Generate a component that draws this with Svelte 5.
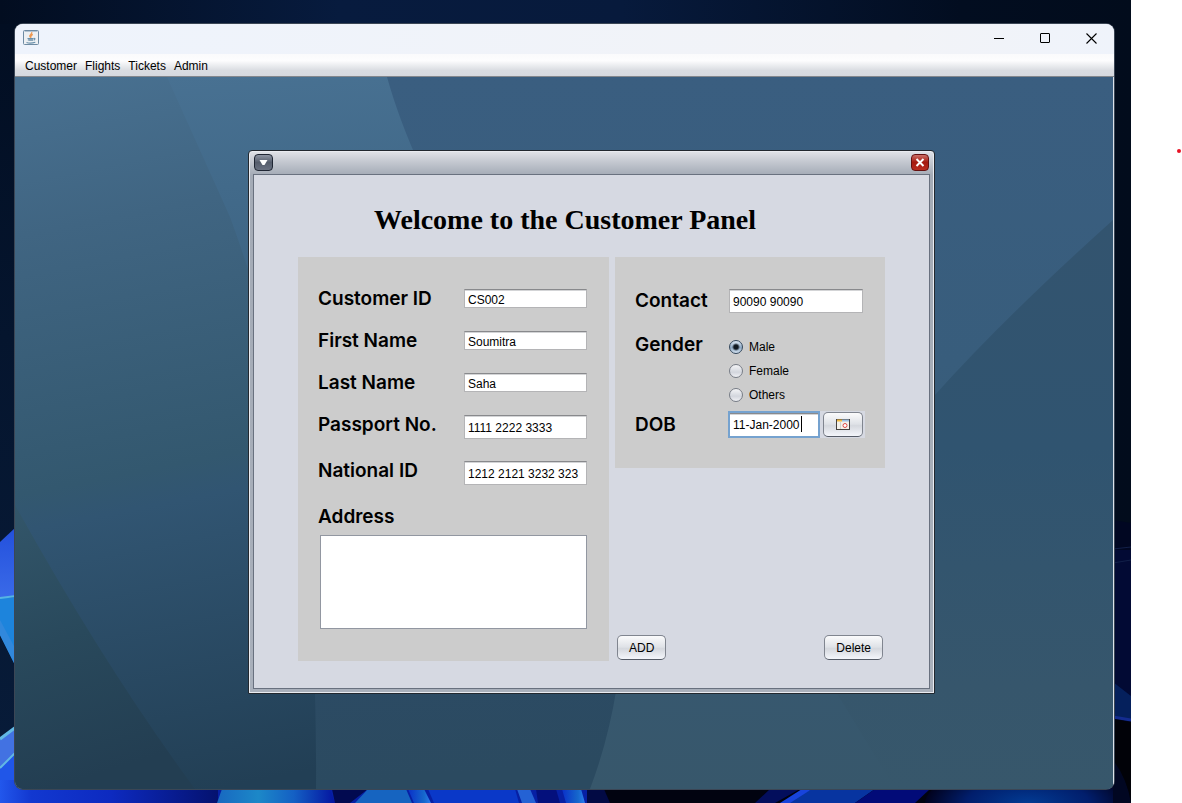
<script>
  const menus = ['Customer', 'Flights', 'Tickets', 'Admin'];
  const genders = ['Male', 'Female', 'Others'];

  let fields = $state([
    { id: 'customer-id', label: 'Customer ID', value: 'CS002', tall: false },
    { id: 'first-name', label: 'First Name', value: 'Soumitra', tall: false },
    { id: 'last-name', label: 'Last Name', value: 'Saha', tall: false },
    { id: 'passport', label: 'Passport No.', value: '1111 2222 3333', tall: true },
    { id: 'national-id', label: 'National ID', value: '1212 2121 3232 323', tall: true }
  ]);
  let address = $state('');
  let contact = $state('90090 90090');
  let gender = $state('Male');
  let dob = $state('11-Jan-2000');
</script>

<div class="screen">
  <div class="desktop">
    <svg class="wallpaper" viewBox="0 0 1131 803" preserveAspectRatio="none" aria-hidden="true">
      <defs>
        <linearGradient id="night" x1="0" x2="1">
          <stop offset="0" stop-color="#020d20" />
          <stop offset=".3" stop-color="#071b3e" />
          <stop offset=".55" stop-color="#071a3c" />
          <stop offset=".85" stop-color="#020d20" />
          <stop offset="1" stop-color="#020c1c" />
        </linearGradient>
        <linearGradient id="edge" x1="0" x2="0" y1="0" y2="1">
          <stop offset="0" stop-color="#020e22" />
          <stop offset=".4" stop-color="#05152e" />
          <stop offset="1" stop-color="#081c3a" />
        </linearGradient>
        <linearGradient id="petal" x1="0" x2="0" y1="0" y2="1">
          <stop offset="0" stop-color="#2350dc" />
          <stop offset="1" stop-color="#3a6ae8" />
        </linearGradient>
        <linearGradient id="floor" x1="0" x2="1">
          <stop offset="0" stop-color="#2257ec" />
          <stop offset=".14" stop-color="#1238d0" />
          <stop offset=".5" stop-color="#0d2ac0" />
          <stop offset="1" stop-color="#04116c" />
        </linearGradient>
        <linearGradient id="glow" x1="0" x2="1">
          <stop offset="0" stop-color="#1868c0" />
          <stop offset=".35" stop-color="#1c88c8" />
          <stop offset=".65" stop-color="#1460c4" />
          <stop offset="1" stop-color="#0414a0" />
        </linearGradient>
        <radialGradient id="deep">
          <stop offset="0" stop-color="#023c94" />
          <stop offset=".6" stop-color="#011e6c" />
          <stop offset="1" stop-color="#01021e" />
        </radialGradient>
        <linearGradient id="streak" x1="0" x2="1">
          <stop offset="0" stop-color="#0a30c8" />
          <stop offset=".7" stop-color="#1668cc" />
          <stop offset="1" stop-color="#2c7cf0" />
        </linearGradient>
      </defs>
      <rect width="1131" height="803" fill="url(#night)" />
      <rect y="24" width="16" height="779" fill="url(#edge)" />
      <path d="M0 542L16 527V597L0 598Z" fill="url(#petal)" />
      <path d="M0 598L16 597V667L0 635Z" fill="#1d84dc" />
      <path d="M0 620L16 650V667L0 635Z" fill="#3188dc" />
      <path d="M0 598L16 596" stroke="#56b4e4" stroke-width="2" />
      <path d="M0 739L16 727V803H0Z" fill="#4272e2" />
      <path d="M0 739L16 727" stroke="#62b8e4" stroke-width="3" />
      <path d="M0 768L16 752V803H0Z" fill="#2056e8" />
      <path d="M0 768L16 752" stroke="#62b8e4" stroke-width="2" />
      <rect x="0" y="780" width="222" height="23" fill="url(#floor)" />
      <rect x="218" y="789" width="370" height="14" fill="#0720a4" />
      <path d="M222 789H330L335 803H217Z" fill="url(#glow)" />
      <path d="M332 789H368L350 803H335Z" fill="#020a50" />
      <path d="M368 789H406L412 803H355Z" fill="#1664c0" />
      <path d="M408 789H424L431 803H414Z" fill="url(#streak)" />
      <path d="M428 789H515L519 803H434Z" fill="#0a38c8" />
      <path d="M517 789H530L536 803H522Z" fill="#2462d4" />
      <path d="M536 789H556L560 803H538Z" fill="#04107c" />
      <path d="M562 789H581L585 803H566Z" fill="url(#streak)" />
      <rect x="587" y="789" width="544" height="14" fill="#010310" />
      <path d="M587 789H604L610 803H587Z" fill="#020a44" />
      <path d="M770 789H800L775 803H755Z" fill="#030e5c" />
      <path d="M812 789H875L855 803H785Z" fill="#0734a0" />
      <path d="M802 789H812L790 803H780Z" fill="#1844dc" />
      <path d="M875 789H930L915 803H855Z" fill="#020b78" />
      <ellipse cx="1028" cy="804" rx="103" ry="40" fill="url(#deep)" />
      <path d="M1113 520L1131 523V803H1113Z" fill="#010722" />
      <path d="M1113 550H1131V700L1113 682Z" fill="#020a34" />
      <path d="M1113 549L1131 547M1113 563L1131 560" stroke="#122048" />
      <path d="M1113 682L1131 696V720L1113 716Z" fill="#05205c" />
      <path d="M1113 717L1131 720" stroke="#142c90" stroke-width="3" />
      <path d="M1113 719L1131 722V803Q1127 778 1113 760Z" fill="#010208" />
    </svg>

    <main class="app-window">
      <header class="title-bar">
        <svg class="java" viewBox="0 0 16 16" width="16" height="16" aria-hidden="true">
          <rect x=".5" y=".5" width="15" height="14" rx="1" fill="#edf0f3" stroke="#6e8ba3" />
          <path d="M1.500 1.500H14.500" stroke="#b4c4d2" />
          <path d="M8.600 2.200C9.800 4 6 4.800 6.900 6.400C7.200 7 7.800 7.300 7.900 7.800M9.800 4.400C8.200 5.200 8 5.800 8.600 6.500" fill="none" stroke="#ee9a53" stroke-width="1.400" />
          <path d="M4.500 8.500H10.500M4.800 10H10.400M10.800 8.400Q13 8.400 11 10.200M3.500 12.500Q7.500 13.700 12.300 12.200" fill="none" stroke="#6a90ab" stroke-width="1.200" />
          <path d="M5 9H10V11H6Z" fill="#8aa5b8" />
        </svg>
        <div class="window-controls">
          <button aria-label="Minimize">
            <svg viewBox="0 0 11 11" width="11" height="11"><path d="M0 5.500H10" stroke="#000" /></svg>
          </button>
          <button aria-label="Maximize">
            <svg viewBox="0 0 11 11" width="11" height="11"><rect x=".5" y=".5" width="9" height="9" rx=".5" fill="none" stroke="#000" /></svg>
          </button>
          <button aria-label="Close">
            <svg viewBox="0 0 11 11" width="11" height="11"><path d="M.5.500L10.500 10.500M10.500.500L.5 10.500" stroke="#000" stroke-width="1.100" /></svg>
          </button>
        </div>
      </header>

      <nav class="menu-bar">
        {#each menus as menu}
          <button>{menu}</button>
        {/each}
      </nav>

      <div class="canvas">
        <svg class="backdrop" viewBox="0 0 1098 712" preserveAspectRatio="none" aria-hidden="true">
          <defs>
            <linearGradient id="b1" gradientUnits="userSpaceOnUse" x1="60" y1="0" x2="200" y2="712">
              <stop offset="0" stop-color="#487090" />
              <stop offset=".2" stop-color="#406582" />
              <stop offset=".55" stop-color="#33586f" />
              <stop offset=".6" stop-color="#315572" />
              <stop offset="1" stop-color="#223f55" />
            </linearGradient>
            <linearGradient id="b2" x1="0" y1="0" x2=".1" y2="1">
              <stop offset="0" stop-color="#487192" />
              <stop offset=".5" stop-color="#355b79" />
              <stop offset=".86" stop-color="#2c4b64" />
              <stop offset="1" stop-color="#2b4a60" />
            </linearGradient>
            <linearGradient id="b3" gradientUnits="userSpaceOnUse" x1="0" y1="0" x2="0" y2="712">
              <stop offset="0" stop-color="#3a5e80" />
              <stop offset=".4" stop-color="#385d7c" />
              <stop offset=".85" stop-color="#37586f" />
              <stop offset="1" stop-color="#37576b" />
            </linearGradient>
            <linearGradient id="b4" gradientUnits="userSpaceOnUse" x1="0" y1="140" x2="0" y2="712">
              <stop offset="0" stop-color="#33546f" />
              <stop offset=".4" stop-color="#305470" />
              <stop offset=".82" stop-color="#36566c" />
              <stop offset="1" stop-color="#37576b" />
            </linearGradient>
            <linearGradient id="b5" x1="0" y1="0" x2=".2" y2="1">
              <stop offset="0" stop-color="#33566a" />
              <stop offset=".5" stop-color="#29495c" />
              <stop offset="1" stop-color="#233e52" />
            </linearGradient>
          </defs>
          <rect width="1098" height="712" fill="url(#b1)" />
          <path d="M152 0L215 140C270 290 303 450 301 712H1098V0Z" fill="url(#b2)" />
          <path d="M372 0C400 100 470 220 540 320C620 420 625 580 575 712H1098V0Z" fill="url(#b3)" />
          <path d="M1098 143Q990 240 919 319Q780 480 812 600L880 712H1098Z" fill="url(#b4)" />
          <path d="M0 428Q90 590 180 712H0Z" fill="url(#b5)" />
        </svg>

        <section class="frame" aria-label="Customer panel">
          <div class="frame-bar">
            <button class="frame-menu" aria-label="Window menu">
              <svg viewBox="0 0 17 15" width="17" height="15"><path d="M4.500 5H12.500L9.500 10H7.500Z" fill="#fff" /></svg>
            </button>
            <button class="frame-close" aria-label="Close panel">
              <svg viewBox="0 0 16 15" width="16" height="15"><path d="M4.500 4L11.500 11M11.500 4L4.500 11" stroke="#fff" stroke-width="2" /></svg>
            </button>
          </div>

          <div class="content">
            <h1>Welcome to the Customer Panel</h1>
            <div class="columns">
              <form class="card identity">
                {#each fields as field}
                  <div class="row">
                    <label for={field.id}>{field.label}</label>
                    <input id={field.id} class:tall={field.tall} type="text" bind:value={field.value} />
                  </div>
                {/each}
                <div class="address">
                  <label for="address">Address</label>
                  <textarea id="address" bind:value={address}></textarea>
                </div>
              </form>

              <div class="side">
                <form class="card details">
                  <label for="contact">Contact</label>
                  <input id="contact" class="tall" type="text" bind:value={contact} />
                  <span id="gender-label" class="caption">Gender</span>
                  <div class="radios" role="radiogroup" aria-labelledby="gender-label">
                    {#each genders as option}
                      <label><input type="radio" name="gender" value={option} bind:group={gender} />{option}</label>
                    {/each}
                  </div>
                  <label for="dob">DOB</label>
                  <div class="date">
                    <div class="date-box">
                      <input id="dob" type="text" bind:value={dob} />
                      <i class="caret"></i>
                    </div>
                    <div class="picker">
                      <button type="button" class="push" aria-label="Pick a date">
                        <svg viewBox="0 0 14 11" width="14" height="11">
                          <rect x=".5" y=".5" width="13" height="10" fill="#f4f1ea" stroke="#45413e" />
                          <path d="M1 1.500H6" stroke="#f2b83c" stroke-width="2" />
                          <path d="M6 1.500H13" stroke="#9cc0e4" stroke-width="2" />
                          <path d="M4.500 3V10" stroke="#d6d4cc" />
                          <circle cx="9" cy="6.500" r="2" fill="#fff" stroke="#e04a44" />
                        </svg>
                      </button>
                    </div>
                  </div>
                </form>
                <div class="actions">
                  <button type="button" class="push">ADD</button>
                  <button type="button" class="push">Delete</button>
                </div>
              </div>
            </div>
          </div>
        </section>
      </div>
    </main>
  </div>
  <aside class="margin-strip"><span class="dot"></span></aside>
</div>

<style>
  :global(body) {
    margin: 0;
    background: #fff;
  }

  .screen,
  .screen :global(*) {
    box-sizing: border-box;
  }

  .screen {
    display: flex;
    min-height: 100vh;
    font: 12px/16px "Liberation Sans", Arial, sans-serif;
    color: #000;
  }

  button,
  input,
  textarea {
    font: inherit;
    color: inherit;
    margin: 0;
  }

  button {
    border: 0;
    padding: 0;
    background: none;
  }

  svg {
    display: block;
  }

  .desktop {
    position: relative;
    flex: 1;
    display: flex;
    padding: 24px 17px 14px 15px;
    overflow: hidden;
  }

  .wallpaper,
  .backdrop {
    position: absolute;
    inset: 0;
    width: 100%;
    height: 100%;
  }

  .margin-strip {
    flex: 0 0 51px;
    background: #fff;
    padding: 149px 1px 0 0;
  }

  .dot {
    display: block;
    width: 4px;
    height: 4px;
    margin-left: auto;
    border-radius: 50%;
    background: #e81224;
  }

  .app-window {
    position: relative;
    flex: 1;
    display: flex;
    flex-direction: column;
    border-radius: 8px;
    overflow: hidden;
    background: #eff3fb;
    box-shadow: 0 0 0 1px #3b4655;
  }

  .title-bar {
    display: flex;
    align-items: flex-start;
    justify-content: space-between;
    height: 30px;
    padding-left: 8px;
    background: linear-gradient(90deg, #eef3fc, #f2f3f7 80%, #eff3fb);
  }

  .java {
    margin-top: 6px;
  }

  .window-controls {
    display: flex;
  }

  .window-controls button {
    display: grid;
    place-items: center;
    width: 46px;
    height: 28px;
  }

  .menu-bar {
    display: flex;
    gap: 8px;
    height: 23px;
    padding: 1px 10px 0;
    border-bottom: 1px solid #83878d;
    background: linear-gradient(#fafafc, #fdfdfe 30%, #d9dce1 75%, #d6d9df);
  }

  .canvas {
    position: relative;
    flex: 1;
    border-right: 1px solid #dbe2ea;
    overflow: hidden;
  }

  .frame {
    position: absolute;
    left: 233px;
    top: 73px;
    width: 687px;
    padding: 0 4px 4px;
    border: 1px solid #22282f;
    border-radius: 4px 4px 1px 1px;
    background: linear-gradient(#e2e4e9, #c6cad2 10px, #a4abb6 24px, #a9b0bb);
    box-shadow: inset 0 0 0 1px #e9ebf0;
  }

  .frame-bar {
    display: flex;
    align-items: center;
    justify-content: space-between;
    height: 23px;
    padding: 0 1px;
  }

  .frame-menu,
  .frame-close {
    border: 1px solid #1f2633;
    border-radius: 4px;
    background: linear-gradient(#8d94a2, #555d6c 50%, #697181);
  }

  .frame-close {
    border-color: #661010;
    background: linear-gradient(#cc7068, #a5190f 48%, #b92c20);
  }

  .content {
    display: flex;
    flex-direction: column;
    gap: 20px;
    padding: 28px 44px 27px;
    border: 1px solid #69717f;
    background: #d6d9e2;
  }

  h1 {
    margin: 0;
    padding-left: 76px;
    font: bold 28px/34px "Liberation Serif", "Times New Roman", serif;
    white-space: nowrap;
  }

  .columns {
    display: grid;
    grid-template-columns: 311fr 270fr;
    gap: 6px;
  }

  .card {
    background: #ccc;
    padding: 32px 22px 32px 20px;
  }

  label,
  .caption {
    font: 600 19px/20px Inter, "Open Sans", sans-serif;
    white-space: nowrap;
  }

  input[type="text"] {
    width: 100%;
    min-width: 0;
    height: 19px;
    padding: 2px 3px 0;
    border: 1px solid #b4b4b6;
    border-top-color: #88898c;
    border-radius: 0;
    background: #fff;
    box-shadow: inset 0 1px 0 #d3d4d6;
    outline: 0;
  }

  input[type="text"].tall {
    height: 24px;
  }

  .identity {
    display: flex;
    flex-direction: column;
    gap: 22px;
  }

  .row {
    display: grid;
    grid-template-columns: 146px 1fr;
    align-items: start;
    min-height: 20px;
  }

  .address label {
    display: block;
    margin-bottom: 8px;
  }

  textarea {
    display: block;
    width: calc(100% - 2px);
    height: 94px;
    margin-left: 2px;
    padding: 4px;
    border: 1px solid #9297a1;
    background: #fff;
    resize: none;
    outline: 0;
  }

  .side {
    display: flex;
    flex-direction: column;
    justify-content: space-between;
  }

  .details {
    display: grid;
    grid-template-columns: 93px 1fr;
    padding-right: 20px;
    padding-bottom: 30px;
    align-items: center;
  }

  .details > input[type="text"] {
    width: auto;
    margin: 0 2px 0 1px;
  }

  .caption {
    align-self: start;
    margin-top: 22px;
  }

  .radios {
    display: flex;
    flex-direction: column;
    gap: 8px;
    padding: 26px 0 8px 1px;
  }

  .radios label {
    display: flex;
    align-items: center;
    gap: 6px;
    font: inherit;
  }

  input[type="radio"] {
    appearance: none;
    width: 14px;
    height: 14px;
    border: 1px solid #777c86;
    border-radius: 50%;
    background: linear-gradient(#f4f5f7, #d3d6dd 60%, #f0f1f5);
  }

  input[type="radio"]:checked {
    border-color: #33475c;
    background: radial-gradient(circle, #101820 2px, transparent 4px), linear-gradient(#dce8f4, #8fa9c3 55%, #d3e2f1);
  }

  .date {
    display: flex;
  }

  .date-box {
    position: relative;
    flex: 1;
    border: 2px solid #75a2cf;
  }

  .date-box input[type="text"] {
    display: block;
    height: 23px;
    padding-top: 0;
    border-width: 1px 0 0;
  }

  .caret {
    position: absolute;
    left: 71px;
    top: 3px;
    width: 1px;
    height: 16px;
    background: #000;
  }

  .picker {
    flex: 0 0 45px;
    display: grid;
    place-items: center;
    background: #d6d9e2;
  }

  .push {
    height: 25px;
    padding: 0 11px;
    border: 1px solid #80858f;
    border-bottom-color: #555b66;
    border-radius: 5px;
    background: linear-gradient(#fbfbfc, #dfe2e7 48%, #d5d8de 55%, #f4f6fb);
  }

  .picker .push {
    display: grid;
    place-items: center;
    width: 40px;
  }

  .actions {
    display: flex;
    justify-content: space-between;
    padding: 0 2px 1px;
  }
</style>
